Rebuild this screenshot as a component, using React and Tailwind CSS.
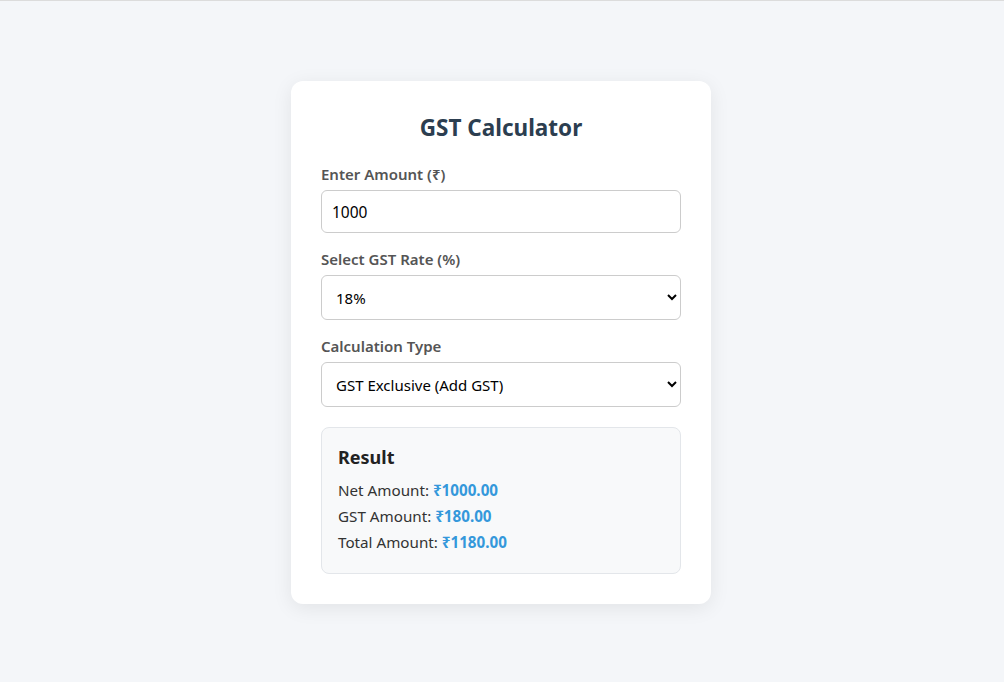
import React, { useState } from "react";

export default function App() {
  const [amount, setAmount] = useState("1000");
  const [rate, setRate] = useState("18");
  const [type, setType] = useState("exclusive");

  const a = parseFloat(amount) || 0;
  const r = parseFloat(rate) || 0;
  let net, gst, total;
  if (type === "exclusive") {
    net = a;
    gst = (a * r) / 100;
    total = a + gst;
  } else {
    total = a;
    net = a / (1 + r / 100);
    gst = a - net;
  }

  return (
    <div
      className="min-h-[682px] w-full bg-[#f4f6f9] border-t border-[#dcdcdc] flex justify-center pr-[2px]"
      style={{ fontFamily: '"Noto Sans", "DejaVu Sans", sans-serif' }}
    >
      <div className="mt-[80px] mb-[79px] w-[420px] self-start rounded-[12px] bg-white px-[30px] pt-[31px] pb-[30px] shadow-[0_4px_20px_rgba(0,0,0,0.08)]">
        <h2 className="text-center text-[22.5px] leading-[32px] font-bold text-[#2c3e50]">GST Calculator</h2>

        <div className="mt-[19px]">
          <label className="block text-[15px] leading-[22px] font-semibold text-[#555] mb-[5px]">Enter Amount (₹)</label>
          <input
            type="number"
            value={amount}
            onChange={(e) => setAmount(e.target.value)}
            className="block w-full h-[43px] rounded-[6px] border border-[#ccc] px-[10px] text-[15.5px] text-black outline-none"
          />
        </div>

        <div className="mt-[15px]">
          <label className="block text-[15px] leading-[22px] font-semibold text-[#555] mb-[5px]">Select GST Rate (%)</label>
          <select
            value={rate}
            onChange={(e) => setRate(e.target.value)}
            className="block w-full h-[45px] rounded-[6px] border border-[#ccc] bg-white px-[10px] text-[15px] text-black outline-none"
          >
            <option value="5">5%</option>
            <option value="12">12%</option>
            <option value="18">18%</option>
            <option value="28">28%</option>
          </select>
        </div>

        <div className="mt-[15px]">
          <label className="block text-[15px] leading-[22px] font-semibold text-[#555] mb-[5px]">Calculation Type</label>
          <select
            value={type}
            onChange={(e) => setType(e.target.value)}
            className="block w-full h-[45px] rounded-[6px] border border-[#ccc] bg-white px-[10px] text-[15px] text-black outline-none"
          >
            <option value="exclusive">GST Exclusive (Add GST)</option>
            <option value="inclusive">GST Inclusive (Remove GST)</option>
          </select>
        </div>

        <div className="mt-[20px] rounded-[8px] border border-[#e3e6ea] bg-[#f8f9fa] px-[16px] pt-[15px] pb-[18px]">
          <h3 className="text-[18px] leading-[28px] font-bold text-[#222]">Result</h3>
          <div className="mt-[6px] text-[15.2px] leading-[26px] text-[#333]">
            <p>Net Amount: <span className="font-bold text-[#3498db]">₹{net.toFixed(2)}</span></p>
            <p>GST Amount: <span className="font-bold text-[#3498db]">₹{gst.toFixed(2)}</span></p>
            <p>Total Amount: <span className="font-bold text-[#3498db]">₹{total.toFixed(2)}</span></p>
          </div>
        </div>
      </div>
    </div>
  );
}
